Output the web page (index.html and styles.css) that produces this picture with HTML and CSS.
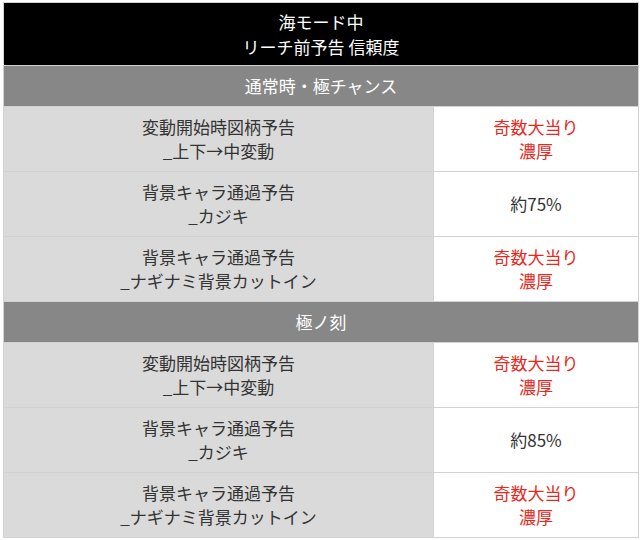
FILE: index.html
```html
<!DOCTYPE html>
<html lang="ja">
<head>
<meta charset="utf-8">
<title>海モード中 リーチ前予告 信頼度</title>
<link rel="stylesheet" href="styles.css">
</head>
<body>
<div class="wrap">
<table class="rel">
  <colgroup><col class="c-name"><col class="c-val"></colgroup>
  <thead>
    <tr><th colspan="2" class="title">海モード中<br>リーチ前予告 信頼度</th></tr>
  </thead>
  <tbody>
    <tr><th colspan="2" class="sec">通常時・極チャンス</th></tr>
    <tr><td class="name">変動開始時図柄予告<br>_上下→中変動</td><td class="val hot">奇数大当り<br>濃厚</td></tr>
    <tr><td class="name">背景キャラ通過予告<br>_カジキ</td><td class="val">約75%</td></tr>
    <tr><td class="name">背景キャラ通過予告<br>_ナギナミ背景カットイン</td><td class="val hot">奇数大当り<br>濃厚</td></tr>
    <tr><th colspan="2" class="sec">極ノ刻</th></tr>
    <tr><td class="name">変動開始時図柄予告<br>_上下→中変動</td><td class="val hot">奇数大当り<br>濃厚</td></tr>
    <tr><td class="name">背景キャラ通過予告<br>_カジキ</td><td class="val">約85%</td></tr>
    <tr><td class="name">背景キャラ通過予告<br>_ナギナミ背景カットイン</td><td class="val hot">奇数大当り<br>濃厚</td></tr>
  </tbody>
</table>
</div>
</body>
</html>
```

FILE: styles.css
```css
html, body {
  margin: 0;
  padding: 0;
  background: #ffffff;
}
.wrap {
  padding: 2px 2px 0 3px;
}
.rel {
  width: 635px;
  border-collapse: collapse;
  table-layout: fixed;
  font-family: "Noto Sans CJK JP", "Noto Sans", sans-serif;
  font-size: 17px;
  color: #333333;
  text-align: center;
}
.c-name { width: 430px; }
.c-val { width: 205px; }
.rel th, .rel td {
  border: 1px solid #d2d2d2;
  font-weight: normal;
  text-align: center;
  vertical-align: middle;
}
.title {
  background: #000000;
  color: #ffffff;
  line-height: 25px;
  padding: 6px 0;
  border-color: #9a9a9a;
}
.sec {
  background: #878787;
  color: #ffffff;
  line-height: 24px;
  padding: 8px 0;
}
.name {
  background: #dadada;
  line-height: 24px;
  padding: 8px 0;
}
.val {
  background: #ffffff;
  line-height: 24px;
  padding: 8px 0;
}
.hot {
  color: #e8281c;
}
```
